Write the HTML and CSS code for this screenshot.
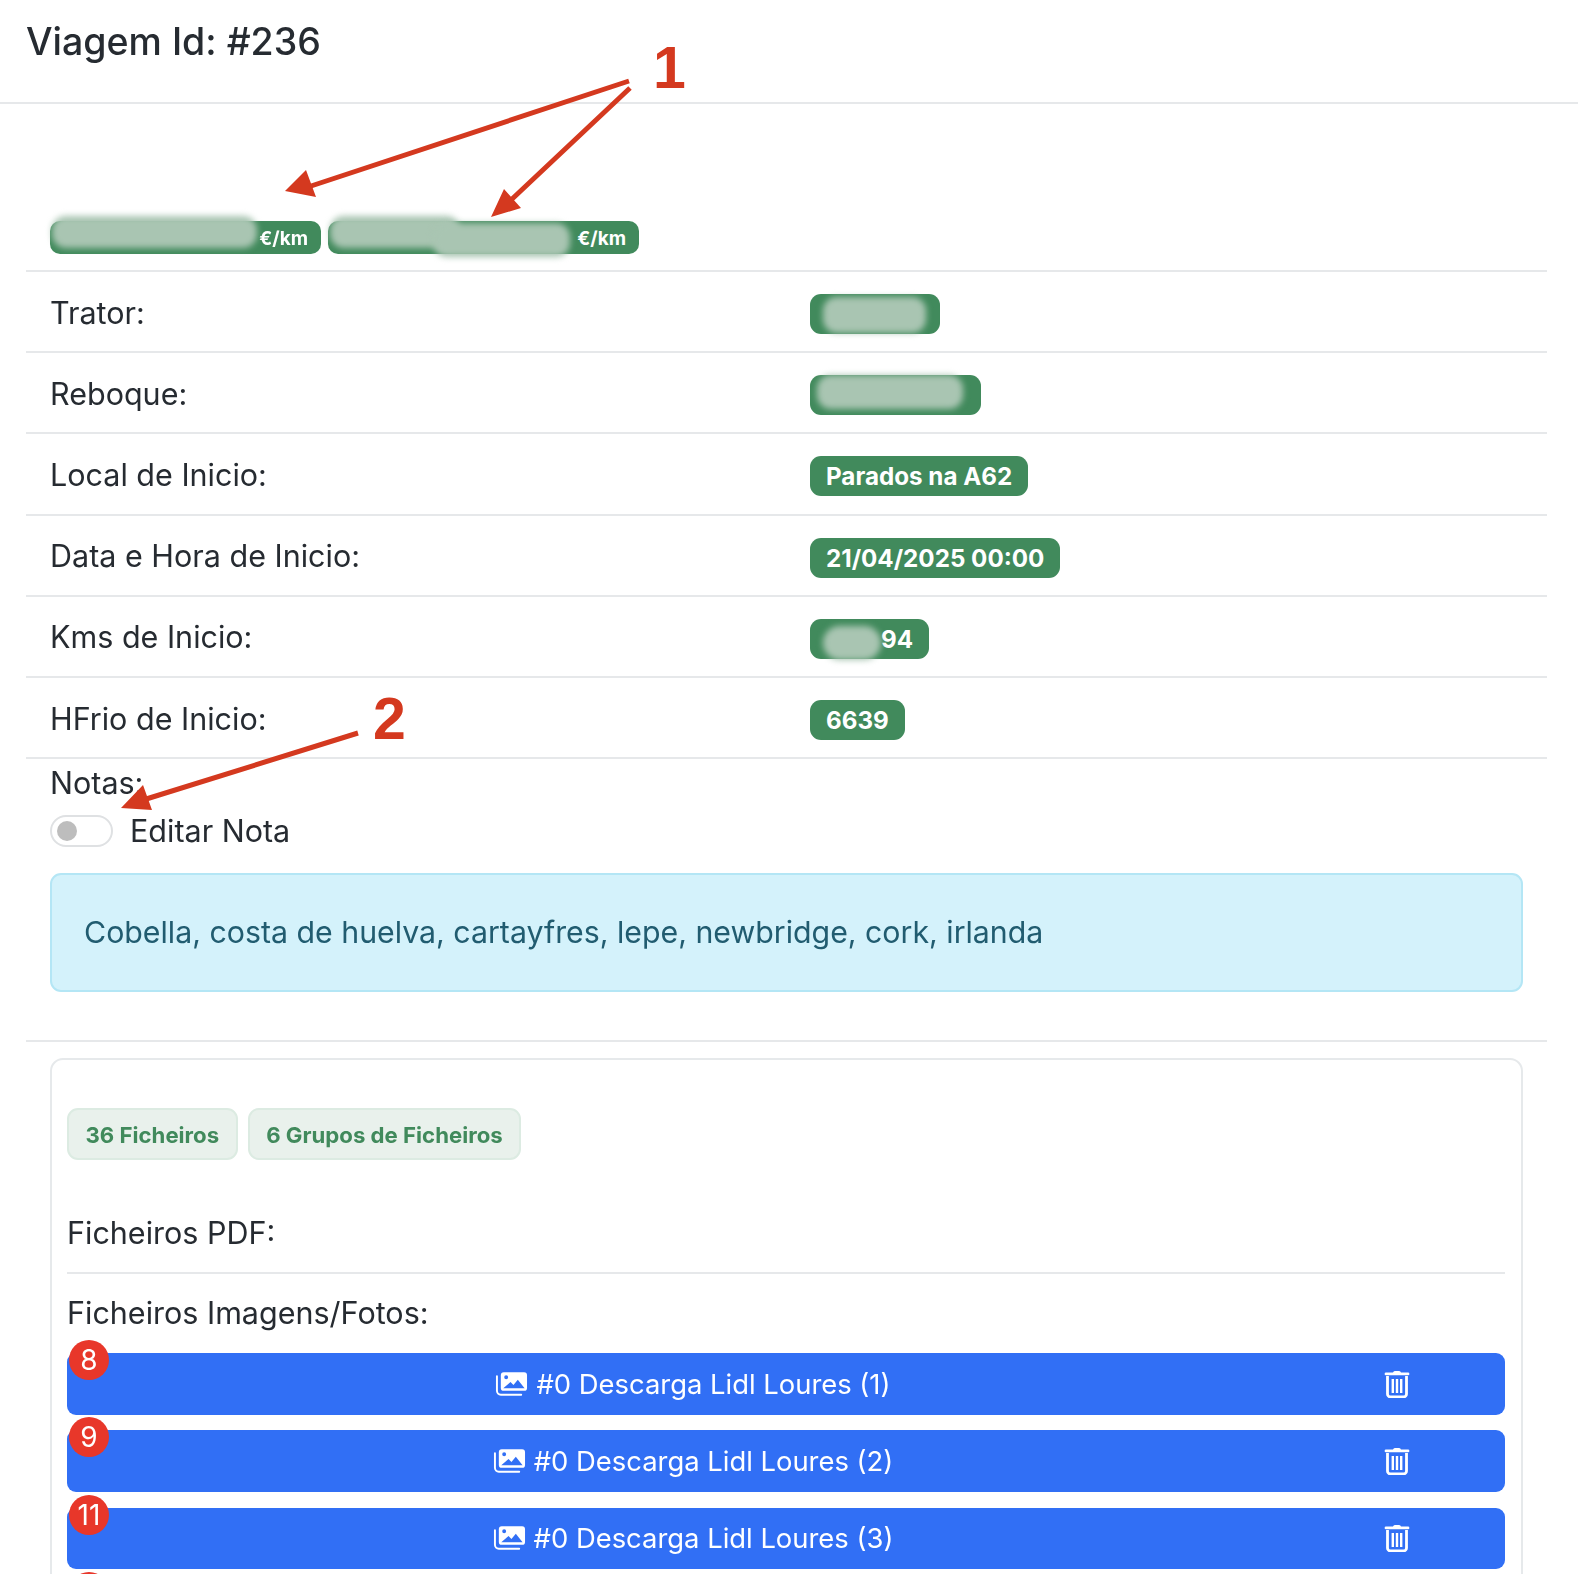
FILE: index.html
```html
<!DOCTYPE html>
<html lang="pt">
<head>
<meta charset="utf-8">
<title>Viagem Id: #236</title>
<link rel="stylesheet" href="styles.css">
</head>
<body>
<svg class="defs" width="0" height="0" aria-hidden="true">
  <symbol id="i-photos" viewBox="0 0 34 26">
    <path d="M2 5v15a4 4 0 0 0 4 4h21" fill="none" stroke="currentColor" stroke-width="2" stroke-linecap="round"/>
    <path fill-rule="evenodd" fill="currentColor" d="M9 1h21a3 3 0 0 1 3 3v13a3 3 0 0 1-3 3H9a3 3 0 0 1-3-3V4a3 3 0 0 1 3-3zM11.500 4a2 2 0 1 0 0 4 2 2 0 0 0 0-4zM8.500 17.500h22l-7-9-4.500 5.500-3-3z"/>
  </symbol>
  <symbol id="i-trash" viewBox="0 0 26 28">
    <path fill="currentColor" d="M9 2.500a2 2 0 0 1 2-1.500h4a2 2 0 0 1 2 1.500h7a1.200 1.200 0 0 1 0 2.800H2a1.200 1.200 0 0 1 0-2.800z"/>
    <path fill="none" stroke="currentColor" stroke-width="2.800" d="M3.500 6v18a3 3 0 0 0 3 3h13a3 3 0 0 0 3-3V6"/>
    <path fill="none" stroke="currentColor" stroke-width="2.400" d="M8.800 9v14M13 9v14M17.200 9v14"/>
  </symbol>
</svg>

<div class="page">
  <header class="top"><h1>Viagem Id: #236</h1></header>

  <section class="content">
    <div class="rates">
      <span class="rate rate-a"><i class="blob blob-a"></i>€/km</span>
      <span class="rate rate-b"><i class="blob blob-b1"></i><i class="blob blob-b2"></i>€/km</span>
    </div>

    <div class="row"><span class="label">Trator:</span><span class="tag tag-trator"><i class="blob blob-t"></i></span></div>
    <div class="row"><span class="label">Reboque:</span><span class="tag tag-reboque"><i class="blob blob-r"></i></span></div>
    <div class="row"><span class="label">Local de Inicio:</span><span class="tag">Parados na A62</span></div>
    <div class="row"><span class="label">Data e Hora de Inicio:</span><span class="tag">21/04/2025 00:00</span></div>
    <div class="row"><span class="label">Kms de Inicio:</span><span class="tag tag-kms"><i class="blob blob-k"></i>94</span></div>
    <div class="row"><span class="label">HFrio de Inicio:</span><span class="tag">6639</span></div>

    <div class="notes">
      <div class="notes-title">Notas:</div>
      <div class="switch-line"><span class="switch"></span><span>Editar Nota</span></div>
      <div class="alert">Cobella, costa de huelva, cartayfres, lepe, newbridge, cork, irlanda</div>
    </div>

    <div class="files">
      <div class="pills"><span class="pill">36 Ficheiros</span><span class="pill">6 Grupos de Ficheiros</span></div>
      <div class="files-title pdf">Ficheiros PDF:</div>
      <div class="files-title imgs">Ficheiros Imagens/Fotos:</div>
      <div class="file"><b class="count">8</b><span class="file-name"><svg class="photos"><use href="#i-photos"/></svg>#0 Descarga Lidl Loures (1)</span><svg class="trash"><use href="#i-trash"/></svg></div>
      <div class="file"><b class="count">9</b><span class="file-name"><svg class="photos"><use href="#i-photos"/></svg>#0 Descarga Lidl Loures (2)</span><svg class="trash"><use href="#i-trash"/></svg></div>
      <div class="file"><b class="count">11</b><span class="file-name"><svg class="photos"><use href="#i-photos"/></svg>#0 Descarga Lidl Loures (3)</span><svg class="trash"><use href="#i-trash"/></svg></div>
      <div class="file"><b class="count"></b></div>
    </div>
  </section>

  <svg class="marks" viewBox="0 0 1578 1574" aria-hidden="true">
    <path class="mark-line" d="M629 81 305 188M630 88 511 200M358 733 143 800"/>
    <path class="mark-head" d="M285 191 306 170 316 197zM491 217 504 189 521 208zM121 808 143 785 152 810z"/>
  </svg>
  <span class="mark-num mark-1">1</span>
  <span class="mark-num mark-2">2</span>
</div>
</body>
</html>
```

FILE: styles.css
```css
html, body {
  margin: 0;
  height: 1574px;
  overflow: hidden;
  background: #fff;
}
.defs { position: absolute; }
.page {
  position: relative;
  height: 1574px;
  overflow: hidden;
  font-family: Inter, "Liberation Sans", sans-serif;
  font-size: 30.500px;
  color: #262b31;
}
.page > header, .page > section { filter: blur(0.45px); }
.top {
  height: 102px;
  border-bottom: 2px solid #e6e8ea;
  padding-left: 26px;
  display: flex;
  align-items: center;
}
.top h1 {
  margin: 0 0 18px;
  font-size: 37.500px;
  font-weight: 500;
  line-height: 44px;
}
.content { padding: 0 31px 0 26px; }
.rates {
  height: 168px;
  box-sizing: border-box;
  padding: 117px 0 0 24px;
  display: flex;
  gap: 7px;
  align-items: flex-start;
  border-bottom: 2px solid #e6e8ea;
}
.rate {
  position: relative;
  height: 33px;
  border-radius: 10px;
  background: #418a5c;
  color: #fff;
  font-size: 19px;
  font-weight: 700;
  line-height: 35px;
  text-align: right;
  padding-right: 13px;
  box-sizing: border-box;
}
.rate-a { width: 271px; }
.rate-b { width: 311px; }
.blob {
  position: absolute;
  display: block;
  background: #a9c5b2;
  border-radius: 14px;
  filter: blur(3px);
}
.blob-a { left: 2px; top: -5px; width: 205px; height: 32px; }
.blob-b1 { left: 2px; top: -5px; width: 130px; height: 32px; }
.blob-b2 { left: 105px; top: 2px; width: 137px; height: 34px; }
.row {
  display: grid;
  grid-template-columns: 760px 1fr;
  align-items: center;
  height: 81.200px;
  box-sizing: border-box;
  padding-left: 24px;
  border-bottom: 2px solid #e6e8ea;
}
.label { margin-top: 1px; }
.tag {
  position: relative;
  justify-self: start;
  box-sizing: border-box;
  height: 40px;
  margin-top: 5px;
  padding: 0 16px;
  border-radius: 11px;
  background: #418a5c;
  color: #fff;
  font-size: 24.200px;
  font-weight: 700;
  line-height: 41px;
}
.tag-trator { width: 130px; }
.tag-reboque { width: 171px; }
.tag-kms { width: 119px; text-align: right; }
.blob-t { left: 13px; top: 3px; width: 103px; height: 36px; }
.blob-r { left: 7px; top: 0; width: 146px; height: 34px; }
.blob-k { left: 13px; top: 7px; width: 58px; height: 34px; border-radius: 20px; }
.notes {
  height: 283px;
  box-sizing: border-box;
  padding: 5px 24px 0;
  border-bottom: 2px solid #e6e8ea;
}
.notes-title { line-height: 38px; }
.switch-line {
  display: flex;
  align-items: center;
  gap: 17px;
  height: 50px;
  margin-top: 3.500px;
}
.switch {
  position: relative;
  box-sizing: border-box;
  width: 63px;
  height: 32px;
  border: 2px solid #dfe1e3;
  border-radius: 16px;
  background: #fff;
}
.switch::after {
  content: "";
  position: absolute;
  left: 5px;
  top: 4px;
  width: 20px;
  height: 20px;
  border-radius: 50%;
  background: #bdbdbd;
}
.alert {
  box-sizing: border-box;
  height: 119px;
  margin-top: 17.500px;
  padding: 0 0 2px 32px;
  display: flex;
  align-items: center;
  border: 2px solid #b4e6f5;
  border-radius: 11px;
  background: #d4f2fb;
  color: #215c70;
  font-size: 30.300px;
}
.files {
  margin: 16px 0 0 24px;
  width: 1473px;
  box-sizing: border-box;
  height: 600px;
  padding: 48px 16px 0 15px;
  border: 2px solid #e6e9eb;
  border-radius: 13px;
}
.pills { display: flex; gap: 10px; }
.pill {
  box-sizing: border-box;
  height: 52px;
  padding: 0 16.500px;
  border: 2px solid #dcebe2;
  border-radius: 11px;
  background: #e9f1ec;
  color: #418a5c;
  font-size: 22.200px;
  font-weight: 700;
  line-height: 50px;
}
.files-title { line-height: 38px; }
.pdf {
  margin-top: 54px;
  padding-bottom: 20px;
  border-bottom: 2px solid #e6e8ea;
}
.imgs { margin-top: 20px; margin-bottom: 21px; }
.file {
  position: relative;
  display: grid;
  grid-template-columns: 1252px 1fr;
  align-items: center;
  height: 61.500px;
  margin-bottom: 15.800px;
  border-radius: 9px;
  background: #316ff5;
  color: #fff;
  font-size: 27.400px;
}
.file-name {
  display: flex;
  justify-content: center;
  align-items: center;
  gap: 8px;
  white-space: nowrap;
}
.photos { width: 33px; height: 26px; }
.trash { width: 26px; height: 28px; justify-self: start; margin-left: 65px; }
.count {
  position: absolute;
  left: 2px;
  top: -13px;
  width: 40px;
  height: 40px;
  border-radius: 50%;
  background: #e8372a;
  color: #fff;
  font-size: 28px;
  font-weight: 400;
  line-height: 40px;
  text-align: center;
}
.marks {
  position: absolute;
  left: 0;
  top: 0;
  width: 1578px;
  height: 1574px;
  pointer-events: none;
}
.mark-line { fill: none; stroke: #d4391f; stroke-width: 5; }
.mark-head { fill: #d4391f; }
.mark-num {
  position: absolute;
  font-family: "Liberation Sans", Arial, sans-serif;
  font-weight: 700;
  font-size: 59px;
  line-height: 60px;
  color: #d4391f;
}
.mark-1 { left: 653px; top: 38px; }
.mark-2 { left: 373px; top: 689px; }
```
